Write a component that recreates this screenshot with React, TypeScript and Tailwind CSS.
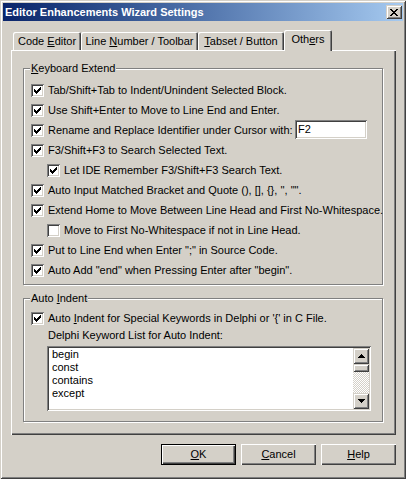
import React from "react";

const raised =
  "shadow-[inset_1px_1px_0_#fff,inset_-1px_-1px_0_#404040,inset_-2px_-2px_0_#808080]";
const raisedSmall =
  "shadow-[inset_1px_1px_0_#d4d0c8,inset_-1px_-1px_0_#404040,inset_2px_2px_0_#fff,inset_-2px_-2px_0_#808080]";
const sunken =
  "shadow-[inset_1px_1px_0_#808080,inset_-1px_-1px_0_#fff,inset_2px_2px_0_#404040,inset_-2px_-2px_0_#d4d0c8]";
const tabEdge =
  "shadow-[inset_1px_1px_0_#fff,inset_-1px_0_0_#404040,inset_-2px_0_0_#808080]";

const CheckMark = () => (
  <svg width="7" height="7" viewBox="0 0 7 7" shapeRendering="crispEdges">
    <rect x="0" y="2" width="1" height="3" fill="#000" />
    <rect x="1" y="3" width="1" height="3" fill="#000" />
    <rect x="2" y="4" width="1" height="3" fill="#000" />
    <rect x="3" y="3" width="1" height="3" fill="#000" />
    <rect x="4" y="2" width="1" height="3" fill="#000" />
    <rect x="5" y="1" width="1" height="3" fill="#000" />
    <rect x="6" y="0" width="1" height="3" fill="#000" />
  </svg>
);

const Box = ({ checked }: { checked: boolean }) => (
  <span
    className={`mt-[4px] flex h-[13px] w-[13px] shrink-0 items-center justify-center bg-white ${sunken}`}
  >
    {checked && <CheckMark />}
  </span>
);

const Row = ({
  checked = true,
  indent = false,
  children,
}: {
  checked?: boolean;
  indent?: boolean;
  children: React.ReactNode;
}) => (
  <div className={`flex h-[20px] items-start ${indent ? "ml-[16px]" : ""}`}>
    <Box checked={checked} />
    <span className="ml-[4px] whitespace-nowrap leading-[20px]">{children}</span>
  </div>
);

const Group = ({
  label,
  className,
  children,
}: {
  label: React.ReactNode;
  className: string;
  children: React.ReactNode;
}) => (
  <div
    className={`relative border border-[#808080] shadow-[inset_1px_1px_0_#fff,1px_1px_0_#fff] ${className}`}
  >
    <span className="absolute left-[6px] top-[-7px] bg-[#d4d0c8] px-[1px] leading-[13px]">
      {label}
    </span>
    {children}
  </div>
);

const UpArrow = () => (
  <svg width="7" height="4" viewBox="0 0 7 4" shapeRendering="crispEdges">
    <path d="M3 0h1v1h1v1h1v1h1v1H0V3h1V2h1V1h1z" fill="#000" />
  </svg>
);

const DownArrow = () => (
  <svg width="7" height="4" viewBox="0 0 7 4" shapeRendering="crispEdges">
    <path d="M0 0h7v1h-1v1h-1v1h-1v1h-1v-1h-1v-1h-1v-1h-1z" fill="#000" />
  </svg>
);

const tabs = [
  { w: "w-[68px]", label: <>Code <u>E</u>ditor</> },
  { w: "w-[117px]", label: <>Line <u>N</u>umber / Toolbar</> },
  { w: "w-[86px]", label: <><u>T</u>abset / Button</> },
];

export default function App() {
  return (
    <div className="flex h-[479px] w-[406px] flex-col bg-[#d4d0c8] font-['Liberation_Sans',Arial,sans-serif] text-[11px] text-black shadow-[inset_1px_1px_0_#d4d0c8,inset_-1px_-1px_0_#404040,inset_2px_2px_0_#fff,inset_-2px_-2px_0_#808080]">
      {/* caption */}
      <div className="mx-[3px] mt-[3px] flex h-[18px] items-center bg-gradient-to-r from-[#0a246a] to-[#a6caf0] pl-[2px]">
        <span className="font-bold text-white">Editor Enhancements Wizard Settings</span>
        <button
          className={`ml-auto mr-[1px] flex h-[14px] w-[16px] items-center justify-center bg-[#d4d0c8] ${raisedSmall}`}
        >
          <svg width="8" height="7" viewBox="0 0 8 7" shapeRendering="crispEdges">
            <path
              d="M0 0h2v1h1v1h2V1h1V0h2v1H7v1H6v1H5v1h1v1h1v1h1v1H6V6H5V5H3v1H2v1H0V6h1V5h1V4h1V3H2V2H1V1H0z"
              fill="#000"
            />
          </svg>
        </button>
      </div>

      <div className="ml-[11px] mt-[9px] w-[385px]">
        {/* tabs */}
        <div className="flex h-[20px] items-end pl-[2px]">
          {tabs.map((t, i) => (
            <div
              key={i}
              className={`flex h-[18px] items-center justify-center rounded-t-[2px] ${t.w} ${tabEdge}`}
            >
              <span className="whitespace-nowrap leading-[13px]">{t.label}</span>
            </div>
          ))}
          <div
            className={`relative z-10 -mb-[1px] flex h-[21px] w-[48px] items-start justify-center rounded-t-[2px] bg-[#d4d0c8] pt-[3px] ${tabEdge}`}
          >
            <span className="leading-[13px]">
              Oth<u>e</u>rs
            </span>
          </div>
        </div>

        {/* page */}
        <div className={`h-[385px] w-[385px] pl-[12px] pt-[18px] ${raised}`}>
          <Group
            className="h-[217px] w-[360px] pl-[7px] pt-[11px]"
            label={
              <>
                <u>K</u>eyboard Extend
              </>
            }
          >
            <Row>Tab/Shift+Tab to Indent/Unindent Selected Block.</Row>
            <Row>Use Shift+Enter to Move to Line End and Enter.</Row>
            <div className="flex h-[20px] items-start">
              <Box checked />
              <span className="ml-[4px] w-[247px] shrink-0 whitespace-nowrap leading-[20px]">
                Rename and Replace Identifier under Cursor with:
              </span>
              <div className={`h-[19px] w-[72px] bg-white pl-[3px] leading-[19px] ${sunken}`}>F2</div>
            </div>
            <Row>F3/Shift+F3 to Search Selected Text.</Row>
            <Row indent>Let IDE Remember F3/Shift+F3 Search Text.</Row>
            <Row>Auto Input Matched Bracket and Quote (), [], {"{}"}, '', "".</Row>
            <Row>Extend Home to Move Between Line Head and First No-Whitespace.</Row>
            <Row indent checked={false}>
              Move to First No-Whitespace if not in Line Head.
            </Row>
            <Row>Put to Line End when Enter ";" in Source Code.</Row>
            <Row>Auto Add "end" when Pressing Enter after "begin".</Row>
          </Group>

          <Group
            className="mt-[13px] h-[124px] w-[360px] pl-[7px] pt-[9px]"
            label={
              <>
                Auto <u>I</u>ndent
              </>
            }
          >
            <Row>
              Auto <u>I</u>ndent for Special Keywords in Delphi or '{"{"}' in C File.
            </Row>
            <div className="ml-[17px] mt-[1px] leading-[13px]">Delphi Keyword List for Auto Indent:</div>
            <div className={`ml-[16px] mt-[4px] flex h-[65px] w-[324px] bg-white p-[2px] ${sunken}`}>
              <div className="flex-1 pl-[3px] leading-[13px]">
                <div>begin</div>
                <div>const</div>
                <div>contains</div>
                <div>except</div>
              </div>
              <div className="flex w-[16px] flex-col">
                <div className={`flex h-[16px] items-center justify-center bg-[#d4d0c8] ${raisedSmall}`}>
                  <UpArrow />
                </div>
                <div className={`h-[8px] bg-[#d4d0c8] ${raisedSmall}`} />
                <div className="flex-1 bg-[image:repeating-conic-gradient(#fff_0_25%,#d4d0c8_0_50%)] bg-[length:2px_2px]" />
                <div className={`flex h-[16px] items-center justify-center bg-[#d4d0c8] ${raisedSmall}`}>
                  <DownArrow />
                </div>
              </div>
            </div>
          </Group>
        </div>

        {/* buttons */}
        <div className="mt-[9px] flex justify-end gap-[5px]">
          <button className="h-[21px] w-[75px] border border-black bg-[#d4d0c8]">
            <div className={`flex h-full w-full items-center justify-center ${raised}`}>
              <u>O</u>K
            </div>
          </button>
          <button className={`flex h-[21px] w-[75px] items-center justify-center bg-[#d4d0c8] ${raised}`}>
            <u>C</u>ancel
          </button>
          <button className={`flex h-[21px] w-[75px] items-center justify-center bg-[#d4d0c8] ${raised}`}>
            <u>H</u>elp
          </button>
        </div>
      </div>
    </div>
  );
}
